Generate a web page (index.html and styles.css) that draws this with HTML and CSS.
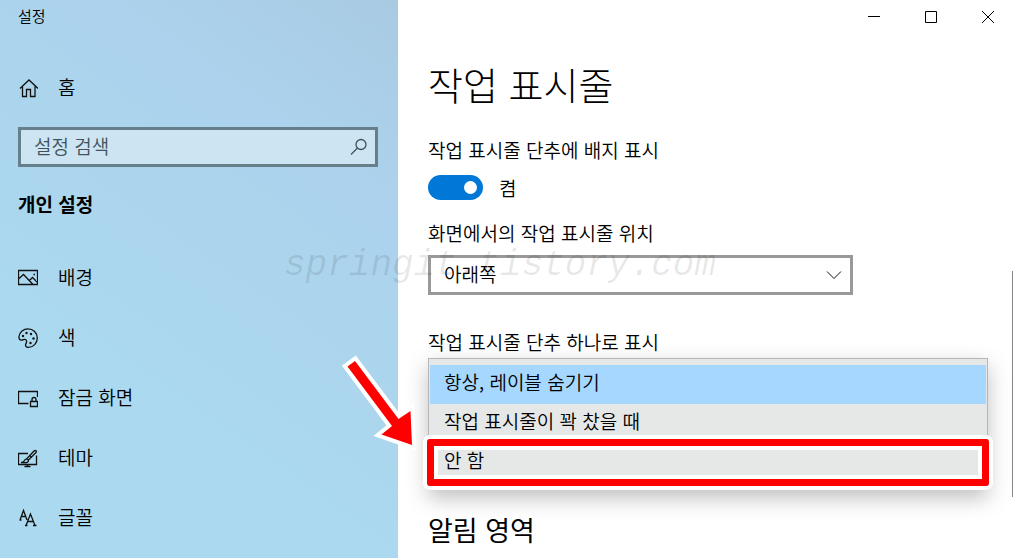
FILE: index.html
```html
<!DOCTYPE html>
<html lang="ko">
<head>
  <meta charset="UTF-8">
  <meta name="viewport" content="width=device-width, initial-scale=1.0">
  <title>설정</title>
  <link rel="stylesheet" href="styles.css">
</head>
<body>
  <div class="window">
    <!-- 왼쪽 메뉴 -->
    <aside class="sidebar">
      <div class="app-title">설정</div>
      <a class="nav-item home" href="#">
        <svg width="20" height="20" viewBox="0 0 20 20"><path d="M2 10.500L11 2l9 8.500M4.500 8.500v10h4v-7h4v7h4.500v-10"/></svg>
        <span>홈</span>
      </a>
      <div class="search">
        <input type="text" placeholder="설정 검색" aria-label="설정 검색">
        <svg width="18" height="18" viewBox="0 0 18 18"><circle cx="12" cy="6.500" r="5"/><path d="M8.500 10L2 16.500"/></svg>
      </div>
      <h2>개인 설정</h2>
      <nav>
        <a class="nav-item" href="#">
          <svg width="20" height="20" viewBox="0 0 20 20"><path d="M.5 2.500h19v14H.5zM.5 11L5.500 6.500l9.500 10M11.500 12.500l3-3 5 5M15.500 6.500h1.500"/></svg>
          <span>배경</span>
        </a>
        <a class="nav-item" href="#">
          <svg width="20" height="20" viewBox="0 0 20 20"><path d="M1 8.500C1.500 4 5.500.8 10 .8c5.200 0 9.300 4 9.300 9.200s-4 9.300-9 9.300c-2.300 0-3.300-1.500-2.500-3.200.8-1.600 1.200-3.700-.3-4.600-1.400-.8-2.500.9-4.300.7C1.600 12 .8 10.500 1 8.500z"/><g class="dots"><circle cx="5" cy="8" r="1.200"/><circle cx="8.500" cy="5" r="1.200"/><circle cx="13" cy="6" r="1.200"/><circle cx="15.500" cy="10.500" r="1.200"/><circle cx="12.500" cy="15" r="1.200"/></g></svg>
          <span>색</span>
        </a>
        <a class="nav-item" href="#">
          <svg width="20" height="20" viewBox="0 0 20 20"><path d="M10.500 15.500H.5v-12h19V9M12.500 13.500h7v5h-7zM14 13.500v-2a2 2 0 0 1 4 0v2"/></svg>
          <span>잠금 화면</span>
        </a>
        <a class="nav-item" href="#">
          <svg width="20" height="20" viewBox="0 0 20 20"><path d="M10 5.500H.5v11h18v-9M9.500 16.500v2.500M6.500 18.500h6M3 14.500c2 0 3-.5 3.500-2s2.500-2 3.500-.8-.2 3-2 3zM8.500 11l7.500-8c1.500-1.300 3 .2 2 1.500L10.500 12M12 8l2 1.500"/></svg>
          <span>테마</span>
        </a>
        <a class="nav-item" href="#">
          <svg width="20" height="20" viewBox="0 0 20 20"><path d="M2 12L5.500 2.500 9 12M3.500 8.500h4M1.500 12h2M8 17.500L12.500 6l4.500 11.500M9.500 13.500h6M7 17.500h2.500M15 17.500h3.500"/></svg>
          <span>글꼴</span>
        </a>
      </nav>
    </aside>

    <!-- 오른쪽 내용 -->
    <main class="main">
      <div class="caption-buttons">
        <button type="button" aria-label="최소화"><svg width="12" height="12" viewBox="0 0 12 12"><path d="M0 5.500h12"/></svg></button>
        <button type="button" aria-label="최대화"><svg width="12" height="12" viewBox="0 0 12 12"><path d="M.5.5h11v11H.5z"/></svg></button>
        <button type="button" aria-label="닫기"><svg width="12" height="12" viewBox="0 0 12 12"><path d="M0 0l12 12M12 0L0 12"/></svg></button>
      </div>

      <div class="content">
        <h1>작업 표시줄</h1>

        <label class="field-label" for="badge">작업 표시줄 단추에 배지 표시</label>
        <div class="toggle-row">
          <input type="checkbox" class="toggle" id="badge" checked>
          <span>켬</span>
        </div>

        <label class="field-label" for="position">화면에서의 작업 표시줄 위치</label>
        <div class="select-box">
          <select id="position">
            <option>아래쪽</option>
            <option>위쪽</option>
            <option>왼쪽</option>
            <option>오른쪽</option>
          </select>
          <svg width="16" height="10" viewBox="0 0 16 10"><path d="M1 1.500l7 7 7-7"/></svg>
        </div>

        <label class="field-label combine-label" for="combine">작업 표시줄 단추 하나로 표시</label>
        <div class="popup">
          <select id="combine" size="3">
            <option selected>항상, 레이블 숨기기</option>
            <option>작업 표시줄이 꽉 찼을 때</option>
            <option>안 함</option>
          </select>
          <div class="highlight"></div>
        </div>

        <h2>알림 영역</h2>
      </div>
      <div class="scrollbar"></div>
    </main>

    <!-- 워터마크, 화살표 -->
    <div class="watermark">springit.tistory.com</div>
    <svg class="arrow" width="90" height="110" viewBox="0 0 90 110"><path d="M12.500 21.500L20 16l43.500 58 12-8L77 100 46.500 89.500 57 81z"/></svg>
  </div>
</body>
</html>
```
FILE: styles.css
```css
* {
  box-sizing: border-box;
}
body {
  margin: 0;
  font-family: "Noto Sans CJK KR", sans-serif;
  font-weight: 350;
  font-size: 19px;
  color: #000;
  background: #fff;
}
h1, h2 {
  margin: 0;
}
svg {
  display: block;
  flex: none;
  fill: none;
  stroke: #111;
  stroke-width: 1.3;
}
.window {
  position: relative;
  display: flex;
  min-height: 100vh;
  overflow: hidden;
}

/* 왼쪽 메뉴 */
.sidebar {
  flex: 0 0 398px;
  padding: 0 20px 0 18px;
  background: linear-gradient(215deg, #a8cbe2 0%, #acd2ed 25%, #abd6ed 50%, #abdaf0 75%);
}
.app-title {
  height: 58px;
  font-size: 15px;
  line-height: 32px;
}
.nav-item {
  display: flex;
  align-items: center;
  gap: 20px;
  height: 60px;
  color: #000;
  text-decoration: none;
}
.nav-item span {
  padding-bottom: 3px;
}
.home {
  margin-bottom: 9px;
}
.search {
  display: flex;
  align-items: center;
  height: 40px;
  padding: 0 8px 0 13px;
  border: 3px solid #667f8b;
  background: #cde5f3;
}
.search input {
  flex: 1;
  min-width: 0;
  padding: 0 0 3px;
  border: none;
  outline: none;
  background: none;
  font: inherit;
}
.search input::placeholder {
  color: #41525c;
}
.search svg {
  stroke: #41525c;
}
.sidebar h2 {
  margin: 22px 0 29px;
  font-size: 19px;
  line-height: 30px;
}
.dots {
  fill: #111;
  stroke: none;
}

/* 오른쪽 내용 */
.main {
  position: relative;
  flex: 1;
  min-width: 0;
}
.caption-buttons {
  display: flex;
  justify-content: flex-end;
  gap: 7px;
  height: 34px;
}
.caption-buttons button {
  display: flex;
  align-items: center;
  justify-content: center;
  width: 50px;
  padding: 0;
  border: none;
  background: none;
}
.caption-buttons svg {
  stroke: #000;
  stroke-width: 1;
}
.content {
  padding: 22px 25px 0 30px;
}
.content h1 {
  margin-bottom: 24px;
  font-size: 38px;
  font-weight: 300;
  line-height: 56px;
}
.field-label {
  display: block;
  line-height: 28px;
}
.toggle-row {
  display: flex;
  align-items: center;
  gap: 16px;
  height: 25px;
  margin: 11px 0 19px;
}
.toggle {
  appearance: none;
  display: flex;
  align-items: center;
  justify-content: flex-end;
  width: 55px;
  height: 25px;
  margin: 0;
  padding: 6px;
  border-radius: 13px;
  background: #0078d7;
}
.toggle::before {
  content: "";
  width: 13px;
  height: 13px;
  border-radius: 50%;
  background: #fff;
}
.select-box {
  display: grid;
  align-items: center;
  max-width: 425px;
  margin-top: 8px;
}
.select-box select {
  grid-area: 1 / 1;
  appearance: none;
  width: 100%;
  height: 40px;
  padding: 0 13px 3px;
  border: 3px solid #999;
  border-radius: 0;
  background: #fff;
  color: #000;
  font: inherit;
}
.select-box svg {
  grid-area: 1 / 1;
  justify-self: end;
  margin-right: 11px;
  stroke-width: 1;
  pointer-events: none;
}
.combine-label {
  margin-top: 33px;
}
.popup {
  position: relative;
  height: 132px;
  margin-top: 2px;
  box-shadow: 0 8px 20px rgba(0, 0, 0, 0.25);
}
.popup select {
  display: block;
  width: 100%;
  height: 100%;
  padding: 6px 1px;
  border: 1px solid #b5b5b5;
  border-radius: 0;
  outline: none;
  overflow: hidden;
  background: #e6e8e8;
  color: #000;
  font: inherit;
}
.popup option {
  height: 39px;
  padding: 3px 14px 0;
  font-weight: 350;
  color: #000;
}
.popup option:checked {
  background: linear-gradient(#a5d7ff, #a5d7ff);
  color: #000;
}
.highlight {
  position: absolute;
  right: -1px;
  bottom: 4px;
  left: -1px;
  height: 47px;
  border: 7px solid #f00;
  border-radius: 3px;
  box-shadow: 0 0 0 4px #fff, inset 0 0 0 4px #fff;
  pointer-events: none;
}
.content h2 {
  margin-top: 20px;
  font-size: 27px;
  font-weight: 400;
  line-height: 40px;
}
.scrollbar {
  position: absolute;
  top: 271px;
  right: 0;
  width: 1px;
  height: 226px;
  background: #858585;
}

.watermark {
  position: absolute;
  top: 244px;
  left: 284px;
  font-family: "Liberation Mono", monospace;
  font-size: 36px;
  font-style: italic;
  line-height: 44px;
  color: rgba(0, 0, 0, 0.09);
  pointer-events: none;
}
.arrow {
  position: absolute;
  top: 345px;
  left: 335px;
  fill: #f00;
  stroke: #fff;
  stroke-width: 8;
  paint-order: stroke;
}
```
